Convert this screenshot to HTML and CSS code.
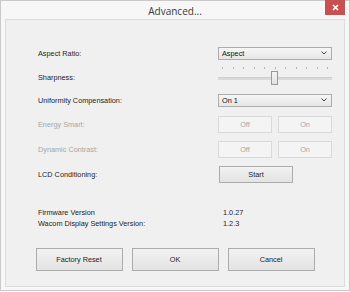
FILE: index.html
```html
<!DOCTYPE html>
<html lang="en">
<head>
    <meta charset="UTF-8">
    <title>Advanced...</title>
    <link rel="stylesheet" href="styles.css">
</head>
<body>
    <div class="window">
        <div class="titlebar">
            <span></span>
            <span class="title">Advanced...</span>
            <button class="close-btn">
                <svg width="7" height="7" viewBox="0 0 7 7"><path d="M1 1 L6 6 M6 1 L1 6" stroke="#fff" stroke-width="1.6"/></svg>
            </button>
        </div>

        <div class="client">
            <div class="row row-aspect">
                <span class="label">Aspect Ratio:</span>
                <div class="select">
                    <span>Aspect</span>
                    <svg width="6" height="4" viewBox="0 0 6 4"><path d="M0.5 0.5 L3 3 L5.5 0.5" fill="none" stroke="#444" stroke-width="1"/></svg>
                </div>
            </div>

            <div class="row row-sharp">
                <span class="label">Sharpness:</span>
                <div class="slider">
                    <div class="ticks">
                        <i></i><i></i><i></i><i></i><i></i><i></i><i></i><i></i><i></i><i></i><i></i>
                    </div>
                    <div class="track"></div>
                    <div class="thumb"></div>
                </div>
            </div>

            <div class="row row-uni">
                <span class="label">Uniformity Compensation:</span>
                <div class="select">
                    <span>On 1</span>
                    <svg width="6" height="4" viewBox="0 0 6 4"><path d="M0.5 0.5 L3 3 L5.5 0.5" fill="none" stroke="#444" stroke-width="1"/></svg>
                </div>
            </div>

            <div class="row row-toggle row-energy">
                <span class="label disabled">Energy Smart:</span>
                <div class="pair">
                    <button class="btn btn-off" disabled>Off</button>
                    <button class="btn btn-off" disabled>On</button>
                </div>
            </div>

            <div class="row row-toggle">
                <span class="label disabled">Dynamic Contrast:</span>
                <div class="pair">
                    <button class="btn btn-off" disabled>Off</button>
                    <button class="btn btn-off" disabled>On</button>
                </div>
            </div>

            <div class="row row-toggle">
                <span class="label">LCD Conditioning:</span>
                <button class="btn btn-start">Start</button>
            </div>

            <div class="info">
                <div class="info-line"><span class="label">Firmware Version</span><span>1.0.27</span></div>
                <div class="info-line"><span class="label">Wacom Display Settings Version:</span><span>1.2.3</span></div>
            </div>

            <div class="actions">
                <button class="btn btn-big">Factory Reset</button>
                <button class="btn btn-big">OK</button>
                <button class="btn btn-big">Cancel</button>
            </div>
        </div>
    </div>
</body>
</html>
```

FILE: styles.css
```css
body {
    margin: 0;
    width: 350px;
    height: 292px;
    overflow: hidden;
    font-family: 'Liberation Sans', Arial, sans-serif;
    font-size: 7.3px;
    color: #1e1e1e;
    background-color: #ffffff;
}

.window {
    box-sizing: border-box;
    width: 350px;
    height: 291px;
    border: 1px solid #c9c9c9;
    background-color: #f7f7f7;
    display: flex;
    flex-direction: column;
}

.titlebar {
    height: 18px;
    display: grid;
    grid-template-columns: 1fr auto 1fr;
    align-items: start;
}

.title {
    font-family: 'Open Sans', sans-serif;
    font-size: 10px;
    color: #3a3a3a;
    line-height: 20px;
}

.close-btn {
    justify-self: end;
    margin: -1px 4px 0 0;
    width: 20px;
    height: 15px;
    padding: 0;
    border: none;
    background-color: #c75050;
    display: flex;
    align-items: center;
    justify-content: center;
}

.client {
    box-sizing: border-box;
    margin: 0 4px;
    height: 268px;
    border: 1px solid #dcdcdc;
    background-color: #f0f0f0;
    display: flex;
    flex-direction: column;
    padding: 26px 12px 0 32px;
}

.row {
    display: flex;
    align-items: center;
    justify-content: space-between;
    height: 14px;
}

.row-sharp {
    height: 22px;
    margin-top: 6px;
}

.row-uni {
    margin-top: 5px;
}

.row-toggle {
    height: 17px;
    margin-top: 8px;
}

.row-energy {
    margin-top: 9px;
}

.label {
    color: #1e1e1e;
}

.label.disabled {
    color: #a6a6a6;
}

.select {
    box-sizing: border-box;
    width: 114px;
    height: 13px;
    border: 1px solid #adadad;
    background: linear-gradient(#f6f6f6, #e6e6e6);
    display: flex;
    align-items: center;
    justify-content: space-between;
    padding: 0 4px 0 3px;
    color: #111;
}

.slider {
    width: 114px;
    height: 22px;
    display: flex;
    flex-direction: column;
    align-items: center;
}

.ticks {
    width: 106px;
    height: 2px;
    margin-top: 1px;
    display: flex;
    justify-content: space-between;
}

.ticks i {
    width: 1px;
    height: 2px;
    background-color: #b4b4b4;
}

.track {
    width: 114px;
    height: 2px;
    margin-top: 8px;
    background-color: #dadada;
    border-top: 1px solid #cfcfcf;
}

.thumb {
    box-sizing: border-box;
    width: 7px;
    height: 14px;
    margin-top: -9px;
    margin-right: 1px;
    border: 1px solid #9a9a9a;
    background: linear-gradient(#f4f4f4, #e2e2e2);
}

.pair {
    width: 114px;
    display: flex;
    justify-content: space-between;
}

.btn {
    box-sizing: border-box;
    font-family: inherit;
    font-size: 7.3px;
    color: #1e1e1e;
    border: 1px solid #acacac;
    background: linear-gradient(#f2f2f2, #e3e3e3);
    padding: 0;
}

.btn-off {
    width: 54px;
    height: 17px;
    color: #a6a6a6;
    border-color: #d9d9d9;
    background: #f4f4f4;
}

.btn-start {
    width: 74px;
    height: 17px;
    margin-right: 39px;
}

.info {
    margin-top: 24px;
}

.info-line {
    display: flex;
    height: 11px;
    line-height: 11px;
}

.info-line .label {
    width: 185px;
}

.actions {
    margin: 19px -12px 0 -32px;
    display: flex;
    justify-content: center;
    gap: 9px;
}

.btn-big {
    width: 87px;
    height: 23px;
}
```
